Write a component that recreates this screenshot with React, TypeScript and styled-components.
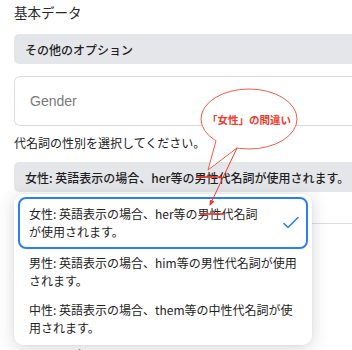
import { createGlobalStyle, styled } from "styled-components";

const GlobalStyle = createGlobalStyle`
  html, body {
    margin: 0;
    padding: 0;
    background: #ffffff;
  }
  body {
    font-family: "Noto Sans CJK JP", "Liberation Sans", sans-serif;
    color: #222;
  }
`;

const Screen = styled.div`
  position: relative;
  width: 352px;
  height: 350px;
  overflow: hidden;
  background: #fff;
`;

const Content = styled.div`
  display: flex;
  flex-direction: column;
  padding-left: 14px;
  width: 380px;
`;

const Heading = styled.h2`
  margin: 3px 0 0;
  font-size: 13.5px;
  line-height: 18px;
  font-weight: 400;
  color: #2a2a2a;
`;

const GrayBar = styled.div<{ $top: number }>`
  margin-top: ${(p) => p.$top}px;
  height: 30px;
  display: flex;
  align-items: center;
  padding-left: 11px;
  background: #e5e6ea;
  border-radius: 5px 0 0 5px;
  font-size: 12px;
  font-weight: 500;
  color: #1f1f1f;
  white-space: nowrap;
`;

const InputBox = styled.div`
  margin-top: 12px;
  height: 48px;
  display: flex;
  align-items: center;
  padding-left: 15px;
  border: 1px solid #dcdcdc;
  border-right: none;
  border-radius: 6px 0 0 6px;
  font-family: "Liberation Sans", sans-serif;
  font-size: 14px;
  color: #7a7a7a;
`;

const Label = styled.div`
  margin-top: 8px;
  font-size: 12px;
  line-height: 18px;
  color: #222;
`;

const Divider = styled.div`
  margin-top: 31px;
  border-top: 1px solid #dedede;
  padding: 123px 0 0 33px;
  font-size: 13px;
  line-height: 16px;
  color: #333;
`;

const Popup = styled.div`
  position: absolute;
  left: 14px;
  top: 194px;
  width: 290px;
  padding: 3px 4px 4px;
  background: #fff;
  border-radius: 9px;
  box-shadow: 0 3px 18px rgba(0, 0, 0, 0.16), 0 0 2px rgba(0, 0, 0, 0.08);
  display: flex;
  flex-direction: column;
`;

const Option = styled.div<{ $selected?: boolean; $pad: string }>`
  display: flex;
  align-items: center;
  padding: ${(p) => p.$pad};
  border: 2px solid ${(p) => (p.$selected ? "#2c7ff1" : "transparent")};
  border-radius: 8px;
  font-size: 12px;
  line-height: 18px;
  color: #222;
`;

const OptionText = styled.div`
  flex: 1;
`;

const Check = styled.svg`
  flex: none;
  width: 16px;
  height: 14px;
  margin-left: 18px;
`;

const Overlay = styled.svg`
  position: absolute;
  left: 0;
  top: 0;
  width: 352px;
  height: 350px;
  pointer-events: none;
`;

const CalloutText = styled.div`
  position: absolute;
  left: 201px;
  top: 89px;
  width: 96px;
  height: 60px;
  display: flex;
  align-items: center;
  justify-content: center;
  font-size: 10.5px;
  font-weight: 700;
  color: #f03c2c;
  white-space: nowrap;
`;

export default function App() {
  return (
    <Screen>
      <GlobalStyle />
      <Content>
        <Heading>基本データ</Heading>
        <GrayBar $top={13}>その他のオプション</GrayBar>
        <InputBox>Gender</InputBox>
        <Label>代名詞の性別を選択してください。</Label>
        <GrayBar $top={10}>女性: 英語表示の場合、her等の男性代名詞が使用されます。</GrayBar>
        <Divider>1990年</Divider>
      </Content>

      <Popup>
        <Option $selected $pad="6px 7px 6px 9px">
          <OptionText>女性: 英語表示の場合、her等の男性代名詞が使用されます。</OptionText>
          <Check viewBox="0 0 16 14">
            <path d="M1 7.5 L5 11.5 L15 1.5" fill="none" stroke="#2c7ff1" strokeWidth="1.6" strokeLinecap="round" strokeLinejoin="round" />
          </Check>
        </Option>
        <Option $pad="3px 9px 3px 9px">
          <OptionText>男性: 英語表示の場合、him等の男性代名詞が使用されます。</OptionText>
        </Option>
        <Option $pad="4px 9px 2px 9px">
          <OptionText>中性: 英語表示の場合、them等の中性代名詞が使用されます。</OptionText>
        </Option>
      </Popup>

      <Overlay viewBox="0 0 352 350">
        <defs>
          <marker id="head" viewBox="0 0 6 6" refX="5" refY="3" markerWidth="6" markerHeight="6" orient="auto">
            <path d="M0 0.5 L6 3 L0 5.5 Z" fill="#f03c2c" />
          </marker>
        </defs>
        <line x1="197" y1="177" x2="222" y2="177" stroke="#e8362a" strokeWidth="1.6" />
        <line x1="200" y1="214" x2="224" y2="214" stroke="#e8362a" strokeWidth="1.6" />
        <ellipse cx="249" cy="119" rx="48" ry="30" fill="#fff" stroke="#f25a4a" strokeWidth="1" />
        <path d="M216 140 L208 170 L237 147.5 Z" fill="#fff" />
        <path d="M216 140.8 L208 170 L237 148" fill="none" stroke="#f25a4a" strokeWidth="1" />
        <line x1="237" y1="148" x2="210" y2="205" stroke="#f03c2c" strokeWidth="1" markerEnd="url(#head)" />
      </Overlay>
      <CalloutText>「女性」の間違い</CalloutText>
    </Screen>
  );
}
